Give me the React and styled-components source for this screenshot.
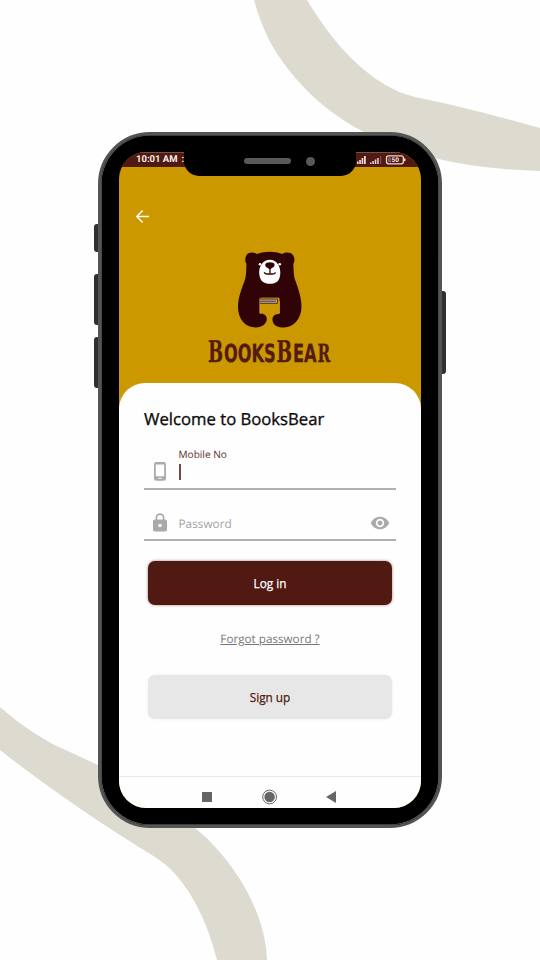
import React from 'react';
import styled, { createGlobalStyle } from 'styled-components';

const Global = createGlobalStyle`
  * { box-sizing: border-box; }
  body { margin: 0; background: #fefefe; font-family: "Open Sans", "Noto Sans", sans-serif; text-rendering: geometricPrecision; }
`;

const Stage = styled.main`
  position: relative;
  width: 540px;
  height: 960px;
  padding: 132px 98px;
  overflow: hidden;
  background: #fefefe;
`;

const Ribbons = styled.svg`
  position: absolute;
  inset: 0;
`;

const Phone = styled.section`
  position: relative;
  width: 344px;
  height: 696px;
  padding: 17px 18px;
  border: 3px solid #545454;
  border-radius: 52px;
  background: #000;
  box-shadow: inset 0 0 0 0.6px #777;
`;

const SideKey = styled.span`
  position: absolute;
  ${({ $side }) => $side}: -7px;
  top: ${({ $top }) => $top}px;
  width: 4px;
  height: ${({ $height }) => $height}px;
  background: #303030;
  border-radius: ${({ $side }) => ($side === 'left' ? '3px 0 0 3px' : '0 3px 3px 0')};
`;

const Screen = styled.div`
  display: flex;
  flex-direction: column;
  width: 302px;
  height: 656px;
  overflow: hidden;
  border-radius: 27px;
  background: #cb9800;
`;

const StatusBar = styled.header`
  display: flex;
  justify-content: space-between;
  align-items: center;
  flex: none;
  height: 15px;
  padding: 0 13.5px 1px 17px;
  background: #501912;
  border-top: 1px solid #76504b;
  color: #f7eeeb;
`;

const Clock = styled.time`
  display: flex;
  gap: 4px;
  font: 700 9.5px/13px Roboto, sans-serif;
`;

const Notch = styled.div`
  position: absolute;
  top: 16px;
  left: 83px;
  display: flex;
  align-items: center;
  width: 172px;
  height: 25px;
  padding: 0 41px 5px 60px;
  gap: 14.5px;
  background: #000;
  border-radius: 0 0 15px 15px;
`;

const Speaker = styled.span`
  flex: none;
  width: 47px;
  height: 6px;
  border-radius: 3px;
  background: #595959;
`;

const Camera = styled.span`
  flex: none;
  width: 9px;
  height: 9px;
  border-radius: 50%;
  background: #595959;
`;

const Hero = styled.div`
  display: flex;
  flex-direction: column;
  flex: none;
  align-items: center;
  height: 215.6px;
  padding-top: 41.5px;
`;

const BackButton = styled.button`
  align-self: flex-start;
  display: flex;
  margin: 0 0 27px 16px;
  padding: 0;
  border: 0;
  background: none;
`;

const Wordmark = styled.svg`
  margin-top: 6px;
  overflow: visible;
  font-family: "DejaVu Sans Condensed", "DejaVu Sans", sans-serif;
  font-weight: 700;
`;

const SerifGlyph = styled.text`
  font-family: "DejaVu Serif Condensed", "DejaVu Serif", serif;
`;

const Card = styled.form`
  display: flex;
  flex-direction: column;
  flex: 1;
  padding: 0 25px;
  background: #fefefe;
  border-radius: 26px 26px 0 0;
`;

const Title = styled.h1`
  margin: 23.3px 0 0;
  font-size: 16.7px;
  line-height: 26px;
  font-weight: 400;
  -webkit-text-stroke: 0.35px currentColor;
  white-space: nowrap;
  color: #0c0c0c;
`;

const Field = styled.label`
  display: grid;
  grid-template-columns: 34.5px 1fr 33px;
  align-items: center;
  height: ${({ $height }) => $height}px;
  margin-top: ${({ $gap }) => $gap}px;
  border-bottom: 2px solid #b0b0b0;
  color: #aaa;
`;

const FieldIcon = styled.span`
  display: flex;
  padding-left: ${({ $inset }) => $inset || 0}px;
  padding-top: ${({ $drop }) => $drop || 0}px;
`;

const FloatingValue = styled.span`
  display: flex;
  flex-direction: column;
  gap: 2px;
  padding-bottom: 8px;
  align-self: end;
`;

const FloatingLabel = styled.span`
  font-size: 10.1px;
  line-height: 15px;
  color: #5c302b;
`;

const Caret = styled.span`
  width: 2px;
  height: 16px;
  background: #501912cc;
`;

const Placeholder = styled.span`
  padding-top: 4px;
  font-size: 11.8px;
  line-height: 18px;
  color: #a3a3a3;
`;

const Action = styled.button`
  flex: none;
  height: 44px;
  margin: ${({ $gap }) => $gap}px 4px 0;
  padding: 0;
  border: 0;
  border-radius: 7px;
  font: 400 11.8px/18px "Open Sans", sans-serif;
  -webkit-text-stroke: 0.25px currentColor;
  background: ${({ $primary }) => ($primary ? '#501912' : '#e7e7e7')};
  color: ${({ $primary }) => ($primary ? '#fff' : '#501912')};
  box-shadow: 0 0 3px ${({ $primary }) => ($primary ? '#50191290' : '#dddddd80')};
`;

const ForgotLink = styled.a`
  align-self: center;
  margin-top: 25px;
  font-size: 11.7px;
  line-height: 18px;
  color: #777;
  text-decoration: underline;
  text-underline-offset: 1px;
`;

const NavBar = styled.nav`
  display: flex;
  align-items: center;
  flex: none;
  height: 32px;
  padding: 8px 85px 0 83px;
  justify-content: space-between;
  border-top: 1px solid #e8e8e8;
  background: #fefefe;
`;

const StatusIcons = () => (
  <svg width="51" height="13" viewBox="0 0 51 13" fill="#ead8d4">
    <path d="M0 8.500h1.600v2.500H0zM2.200 7H3.900V11H2.200zM4.600 5H6.300V11H4.600zM7 3h1.800V11H7z" />
    <path d="M13 9.500h1.500V11H13zM15.400 8h1.500v3h-1.500zM17.800 6.500h1.500V11h-1.500zM20.200 5h1.500v6h-1.500z" />
    <path d="M23 3h1.200V11H23z" opacity=".3" />
    <rect x="29.500" y="2.800" width="16.800" height="8" rx="2" fill="none" stroke="#ead8d4" strokeWidth="1.300" />
    <path d="M47 5l1.500.8v2l-1.500.8z" />
    <rect x="31" y="4.300" width="3" height="5" opacity=".35" />
    <text x="38.200" y="9.200" textAnchor="middle" fontFamily="Roboto, sans-serif" fontWeight="900" fontSize="6.500">50</text>
  </svg>
);

const BearLogo = () => (
  <svg width="66" height="77" viewBox="237 251 66 77">
    <path fill="#300407" d="M246 256C248 251.500 254 252 257 254C265 251 275 251 282 254C286 251.500 292 252 293.500 256C295 259 294.500 262 293.300 264C293.800 271 293.500 276 295.500 281C298 288 301.500 297 301.500 307C301.500 319 293 327.500 284 327.500C276 327.500 272 324 272.500 318.500C273 315 276 313.500 279.500 314V298H259.800V314C263 313 266.500 315 266.800 318.500C267 324 262 327.500 256 327.500C245 327.500 238 319 238 307C238 297 242 288 244.500 281C246.500 276 246 271 246.500 264C245 262 244.800 259 246 256Z" />
    <path fill="none" stroke="#d7a735" strokeWidth=".7" d="M259.800 313V299Q260 298 262 298H278.500M279.500 301V313" />
    <path fill="#b3aaa7" d="M260.300 299.300h17v3.700h-17z" />
    <path fill="none" stroke="#300407" strokeWidth=".7" d="M260 299H277.500V303.300H260M260 301.200h16" />
    <path fill="#fefefe" d="M270 259.800C262.500 259.800 259 267 259.200 273C259.400 281 264 283.800 270 283.800C276 283.800 280.200 281 280.300 273C280.500 267 277 259.800 270 259.800Z" />
    <path fill="#300407" d="M265.200 264.500C265.700 261.500 274 261.500 274.600 264.500C274.600 267.300 271.700 268 270.600 269V273.400H269.300V269C268 268 265.200 267.300 265.200 264.500Z" />
    <path fill="none" stroke="#300407" strokeWidth="1.300" strokeLinecap="round" d="M264.400 272.800Q265.500 274 267 274H272.800Q274.400 274 275.200 272.800" />
    <circle cx="260" cy="264.300" r="1.300" fill="#fff" />
    <circle cx="279.700" cy="264.300" r="1.300" fill="#fff" />
  </svg>
);

export default function App() {
  return (
    <>
      <Global />
      <Stage>
        <Ribbons width="540" height="960" viewBox="0 0 540 960" fill="#dddbd0">
          <path d="M254 0H307C324 28 338 45 352 59C374 80 394 92 415 97C450 104 490 114 540 128V171C500 170 462 165 435 158L410 160L362 131C322 110 294 80 276 52C266 36 259 18 254 0Z" />
          <path d="M0 707C24 728 48 743 70 752L98 765L190 824C225 850 265 904 267 960H217C206 915 184 875 155 857C101 824 44 785 0 750Z" />
        </Ribbons>
        <Phone>
          <SideKey $side="left" $top={89} $height={28} />
          <SideKey $side="left" $top={139} $height={51} />
          <SideKey $side="left" $top={202} $height={51} />
          <SideKey $side="right" $top={156} $height={83} />
          <Screen>
            <StatusBar>
              <Clock><span>10:01 AM</span><span>:</span></Clock>
              <StatusIcons />
            </StatusBar>
            <Hero>
              <BackButton type="button" aria-label="Back">
                <svg width="15" height="15" viewBox="0 0 15 15" fill="none" stroke="#fff" strokeWidth="1.400">
                  <path d="M7.700 1.500L1.700 7.500L7.700 13.500M1.700 7.500H14" />
                </svg>
              </BackButton>
              <BearLogo />
              <Wordmark width="124" height="32" viewBox="0 0 124 32" fill="#551b12" stroke="#551b12" strokeWidth=".3">
                <SerifGlyph transform="translate(0 28.200) scale(.66 1)" fontSize="30">B</SerifGlyph>
                <text transform="translate(16 28.200) scale(.72 1)" fontSize="25">OOKS</text>
                <SerifGlyph transform="translate(68.500 28.200) scale(.68 1)" fontSize="30">B</SerifGlyph>
                <text transform="translate(85 28.200) scale(.72 1)" fontSize="25">EA</text>
                <SerifGlyph transform="translate(109.500 28.200) scale(.68 1)" fontSize="25">R</SerifGlyph>
              </Wordmark>
            </Hero>
            <Card>
              <Title>Welcome to BooksBear</Title>
              <Field $height={45} $gap={13}>
                <FieldIcon $inset={10} $drop={11}>
                  <svg width="12" height="19" viewBox="0 0 12 19" fill="currentColor" fillRule="evenodd">
                    <path d="M2.200 0h7.600A2.200 2.200 0 0 1 12 2.200v14.300a2.200 2.200 0 0 1-2.200 2.200H2.200A2.200 2.200 0 0 1 0 16.500V2.200A2.200 2.200 0 0 1 2.200 0zM1.800 2.500v11.800h8.400V2.500zM4.300 15.800v1h3.400v-1z" />
                  </svg>
                </FieldIcon>
                <FloatingValue>
                  <FloatingLabel>Mobile No</FloatingLabel>
                  <Caret />
                </FloatingValue>
              </Field>
              <Field $height={36} $gap={15}>
                <FieldIcon $inset={9} $drop={1}>
                  <svg width="14" height="19" viewBox="0 0 14 19" fill="currentColor" fillRule="evenodd">
                    <path d="M2.600 6.500V4.600a4.400 4.400 0 0 1 8.800 0v1.900h.8A1.800 1.800 0 0 1 14 8.300v8.400a1.800 1.800 0 0 1-1.800 1.800H1.800A1.800 1.800 0 0 1 0 16.700V8.300a1.800 1.800 0 0 1 1.800-1.800zM4.300 6.500h5.400V4.600a2.700 2.700 0 0 0-5.400 0zM7 10.700a1.800 1.800 0 1 0 0 3.600a1.800 1.800 0 0 0 0-3.600z" />
                  </svg>
                </FieldIcon>
                <Placeholder>Password</Placeholder>
                <FieldIcon $inset={7} $drop={2}>
                  <svg width="20" height="20" viewBox="0 0 24 24" fill="currentColor">
                    <path d="M12 4.500C7 4.500 2.730 7.610 1 12c1.730 4.390 6 7.500 11 7.500s9.270-3.110 11-7.500c-1.730-4.390-6-7.500-11-7.500zM12 17c-2.760 0-5-2.240-5-5s2.240-5 5-5 5 2.240 5 5-2.240 5-5 5zm0-8c-1.660 0-3 1.340-3 3s1.340 3 3 3 3-1.340 3-3-1.340-3-3-3z" />
                  </svg>
                </FieldIcon>
              </Field>
              <Action type="button" $primary $gap={20}>Log in</Action>
              <ForgotLink>Forgot password ?</ForgotLink>
              <Action type="button" $gap={27}>Sign up</Action>
            </Card>
            <NavBar>
              <svg width="10" height="10"><rect width="10" height="10" fill="#666" /></svg>
              <svg width="16" height="16" viewBox="0 0 16 16" fill="#666">
                <circle cx="8.600" cy="8" r="6.900" fill="none" stroke="#666" />
                <circle cx="8.600" cy="8" r="5.200" />
              </svg>
              <svg width="10" height="12" fill="#666"><path d="M0 6L10 0V12Z" /></svg>
            </NavBar>
          </Screen>
          <Notch>
            <Speaker />
            <Camera />
          </Notch>
        </Phone>
      </Stage>
    </>
  );
}
